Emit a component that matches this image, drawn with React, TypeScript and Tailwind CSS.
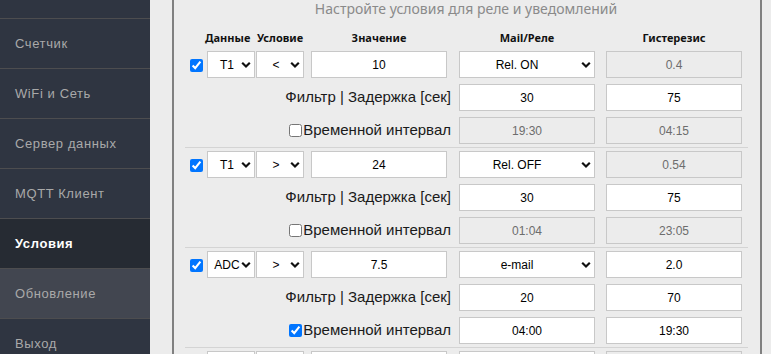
import React from "react";

const menu = [
  { name: "", active: false, hover: false },
  { name: "Счетчик", active: false, hover: false },
  { name: "WiFi и Сеть", active: false, hover: false },
  { name: "Сервер данных", active: false, hover: false },
  { name: "MQTT Клиент", active: false, hover: false },
  { name: "Условия", active: true, hover: false },
  { name: "Обновление", active: false, hover: true },
  { name: "Выход", active: false, hover: false },
];

type Rule = {
  on: boolean;
  src: string;
  cond: string;
  value: string;
  action: string;
  hyst: string;
  hystOn: boolean;
  filter: string;
  delay: string;
  timeOn: boolean;
  from: string;
  to: string;
};

const rules: Rule[] = [
  { on: true, src: "T1", cond: "<", value: "10", action: "Rel. ON", hyst: "0.4", hystOn: false, filter: "30", delay: "75", timeOn: false, from: "19:30", to: "04:15" },
  { on: true, src: "T1", cond: ">", value: "24", action: "Rel. OFF", hyst: "0.54", hystOn: false, filter: "30", delay: "75", timeOn: false, from: "01:04", to: "23:05" },
  { on: true, src: "ADC", cond: ">", value: "7.5", action: "e-mail", hyst: "2.0", hystOn: true, filter: "20", delay: "70", timeOn: true, from: "04:00", to: "19:30" },
  // next rule, only its top edge is on screen
  { on: false, src: "", cond: "", value: "", action: "", hyst: "", hystOn: false, filter: "", delay: "", timeOn: false, from: "", to: "" },
];

const Chevron = () => (
  <svg
    className="pointer-events-none absolute right-[4px] top-1/2 -translate-y-1/2"
    width="10"
    height="7"
    viewBox="0 0 10 7"
  >
    <path d="M1.2 1.3 L5 5 L8.8 1.3" fill="none" stroke="#111" strokeWidth="2.2" />
  </svg>
);

const Select = ({ value, wide }: { value: string; wide?: boolean }) => (
  <div className={`relative h-[27px] ${wide ? "w-[136px]" : "w-[48px]"}`}>
    <select
      defaultValue={value}
      className={`h-full w-full appearance-none border border-[#c8c8c8] bg-white text-[12px] text-black outline-none [text-align-last:center] ${
        wide ? "pr-[20px]" : "pl-[2px] pr-[10px]"
      }`}
    >
      <option>{value}</option>
    </select>
    <Chevron />
  </div>
);

const Field = ({ value, enabled }: { value: string; enabled: boolean }) => (
  <input
    readOnly
    disabled={!enabled}
    value={value}
    className={`h-[27px] w-[136px] border border-[#c8c8c8] text-center text-[12px] outline-none ${
      enabled ? "bg-white text-black" : "bg-[#ececec] text-[#6d6d6d]"
    }`}
  />
);

const Check = ({ checked }: { checked: boolean }) => (
  <input type="checkbox" defaultChecked={checked} className="m-0 h-[13px] w-[13px] accent-[#0075ff]" />
);

const cols = "grid grid-cols-[22px_49px_49px_148px_147px_148px] items-center";

const RuleBlock = ({ r }: { r: Rule }) => (
  <div className="border-b border-[#d4d4d4]">
    <div className={`${cols} h-[33px]`}>
      <div className="flex pl-[5px] pt-[1px]">
        <Check checked={r.on} />
      </div>
      <Select value={r.src} />
      <Select value={r.cond} />
      <div className="pl-[6px]">
        <Field value={r.value} enabled />
      </div>
      <div className="pl-[6px]">
        <Select value={r.action} wide />
      </div>
      <div className="pl-[6px]">
        <Field value={r.hyst} enabled={r.hystOn} />
      </div>
    </div>
    <div className={`${cols} h-[33px]`}>
      <div className="col-span-4 pr-[2px] text-right text-[15px] text-[#1a1a1a]">Фильтр | Задержка [сек]</div>
      <div className="pl-[6px]">
        <Field value={r.filter} enabled />
      </div>
      <div className="pl-[6px]">
        <Field value={r.delay} enabled />
      </div>
    </div>
    <div className={`${cols} h-[33px]`}>
      <div className="col-span-4 flex items-center justify-end gap-[1px] pr-[2px] text-[15px] text-[#1a1a1a]">
        <Check checked={r.timeOn} />
        <span>Временной интервал</span>
      </div>
      <div className="pl-[6px]">
        <Field value={r.from} enabled={r.timeOn} />
      </div>
      <div className="pl-[6px]">
        <Field value={r.to} enabled={r.timeOn} />
      </div>
    </div>
  </div>
);

export default function App() {
  return (
    <div className="flex h-[354px] w-[771px] overflow-hidden bg-[#ececec] font-['Noto_Sans',sans-serif]">
      <nav className="w-[150px] shrink-0 overflow-hidden bg-[#2f3541] font-['Liberation_Sans',Arial,sans-serif]">
        <div className="-mt-[32px]">
          {menu.map((m, i) => (
            <div
              key={i}
              className={`flex h-[50px] items-center border-t border-[#4d4d4f] pl-[15px] text-[13px] tracking-[0.6px] ${
                m.active
                  ? "bg-[#262b33] font-bold text-white"
                  : m.hover
                  ? "bg-[#424650] text-[#a9a9a9]"
                  : "text-[#a9a9a9]"
              }`}
            >
              {m.name}
            </div>
          ))}
        </div>
      </nav>
      <main className="ml-[22px] h-full w-[590px] border-x-2 border-[#808080]">
        <div className="h-[18px] pr-[2px] text-center text-[14px] leading-[18px] text-[#8a8a8a]">
          Настройте условия для реле и уведомлений
        </div>
        <div className="pl-[11px]">
          <div className={`${cols} mt-[10px] h-[20px] text-[11px] font-bold text-[#111]`}>
            <div />
            <div className="-ml-[2px] whitespace-nowrap">Данные</div>
            <div className="pl-[1px] whitespace-nowrap">Условие</div>
            <div className="pl-[6px]">
              <div className="w-[136px] text-center">Значение</div>
            </div>
            <div className="pl-[6px]">
              <div className="w-[136px] text-center">Mail/Реле</div>
            </div>
            <div className="pl-[6px]">
              <div className="w-[136px] text-center">Гистерезис</div>
            </div>
          </div>
          <div className="w-[563px] font-['Liberation_Sans',Arial,sans-serif]">
            {rules.map((r, i) => (
              <RuleBlock key={i} r={r} />
            ))}
          </div>
        </div>
      </main>
    </div>
  );
}
